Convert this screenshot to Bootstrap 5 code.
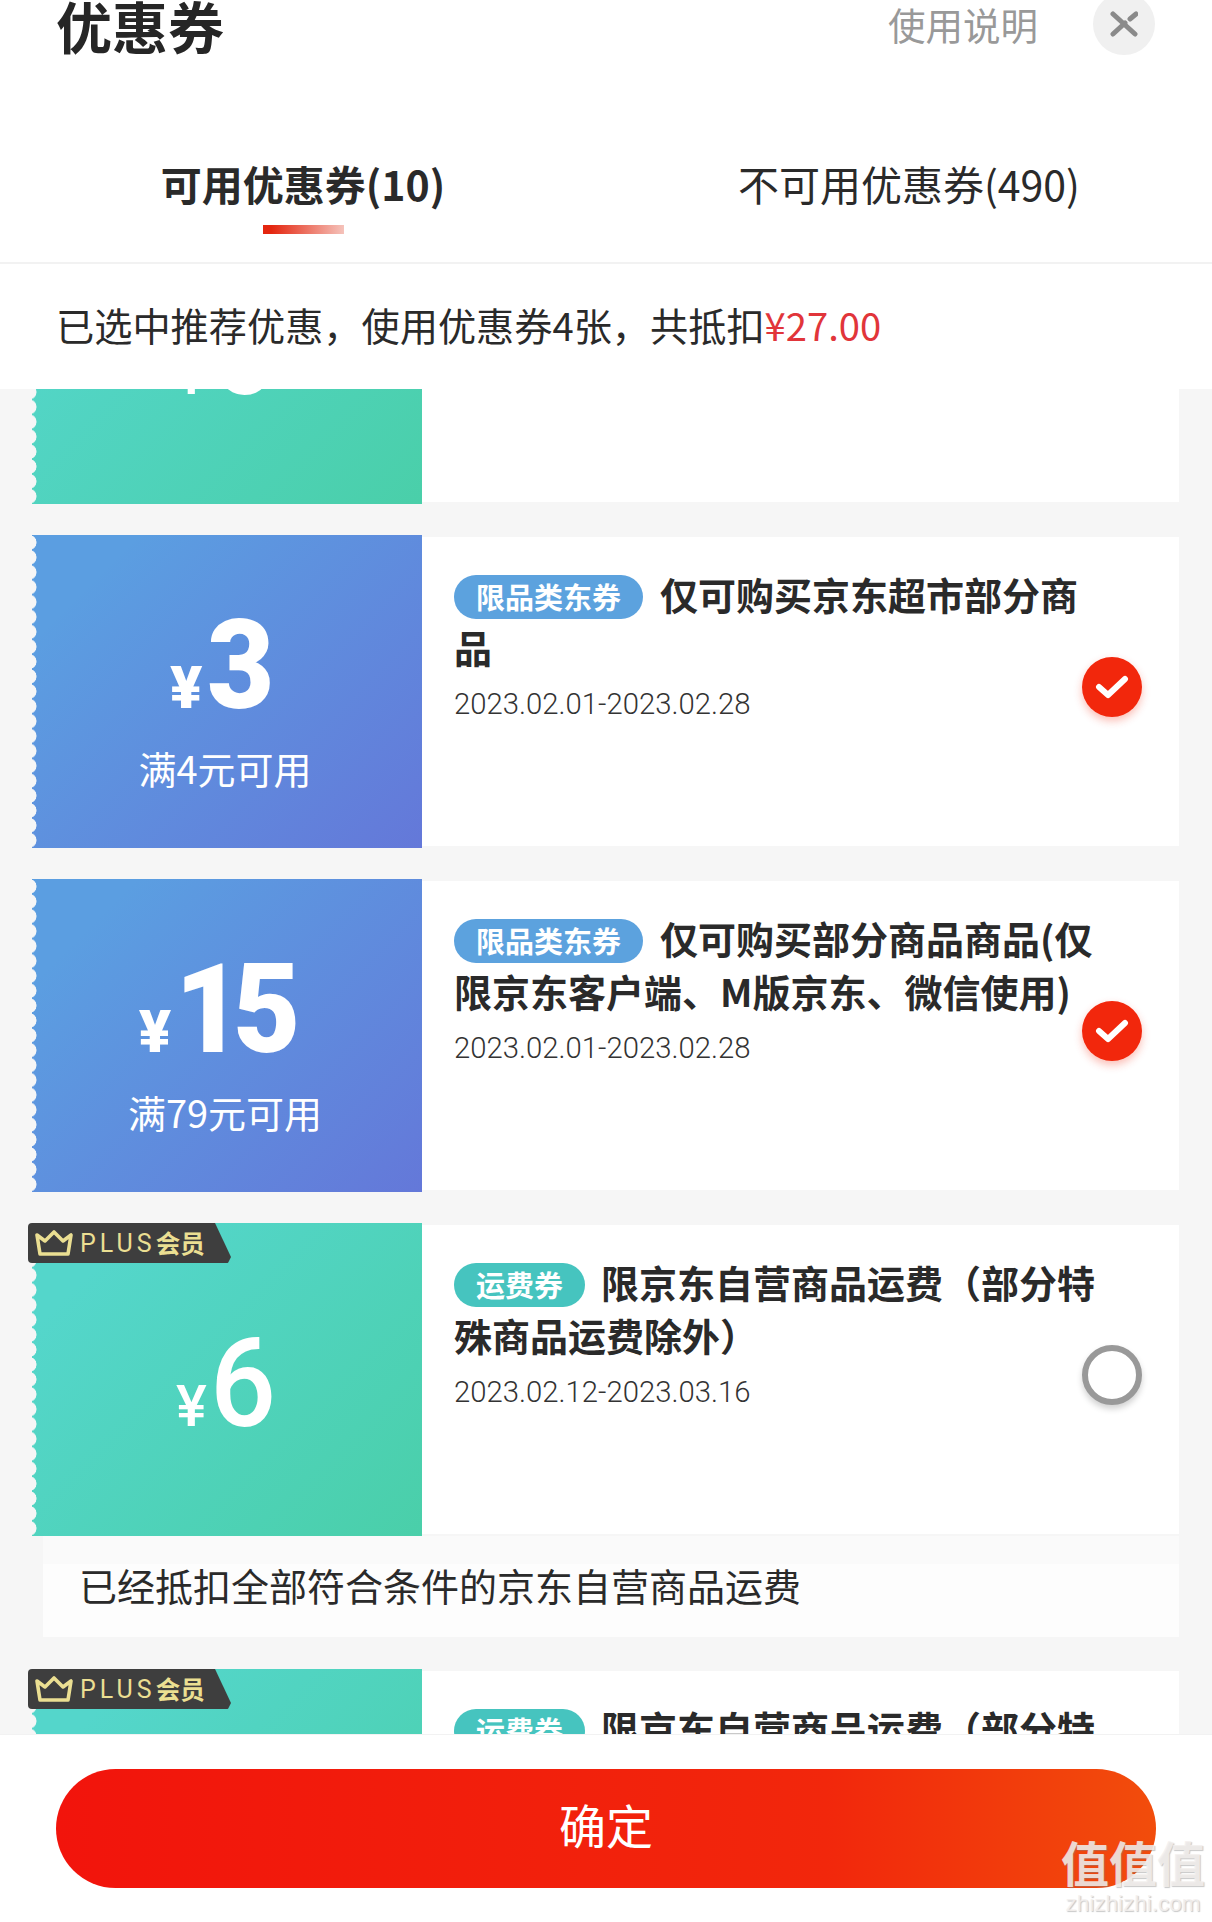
<!DOCTYPE html>
<html lang="zh-CN">
<head>
  <meta charset="UTF-8">
  <meta name="viewport" content="width=device-width, initial-scale=1">
  <title>优惠券</title>
  <link href="https://cdn.jsdelivr.net/npm/bootstrap@5.3.0/dist/css/bootstrap.min.css" rel="stylesheet">
  <style>
    html, body { height: 100%; }
    body { font-family: "Noto Sans CJK SC", sans-serif; color: #2a2a2a; overflow: hidden; }
    .sheet { height: 1922px; }

    /* header */
    .top-row { height: 50px; padding: 0 57px 0 56px; }
    .sheet-title { font-size: 56px; font-weight: 700; line-height: 1; color: #262626; }
    .help-link { font-size: 37.5px; line-height: 1; color: #999; margin: 0 55px 2px 0; }
    .close-btn { width: 62px; height: 62px; background: #f0f0f0; flex-shrink: 0; margin-bottom: 2px; }
    .tabbar { padding-top: 106px; border-bottom: 2px solid #f2f2f2; }
    .tab-item { font-size: 41px; line-height: 54px; color: #2a2a2a; padding: 0 0 28px; }
    .tab-item:hover { color: #2a2a2a; }
    .tab-item.active { font-weight: 700; }
    .tab-bar-mark { width: 81px; height: 9px; margin: 15px auto 0; }
    .tab-item.active .tab-bar-mark { background: linear-gradient(90deg, #e4260f 10%, #f5c3bb 100%); }
    .info-row { height: 125px; padding: 0 0 4px 56px; font-size: 38.2px; }
    .info-row em { font-style: normal; color: #e1353a; }

    /* list */
    .coupon-list { background: #f6f6f6; overflow: hidden; }
    .coupon-scroll { margin-top: -198px; }
    .coupon-item { height: 313px; margin: 0 33px 31px 32px; }
    .ticket { width: 390px; height: 313px; flex-shrink: 0; color: #fff; }
    .ticket::before {
      content: ""; position: absolute; left: 0; top: 0; bottom: 0; width: 6px;
      background: radial-gradient(circle at -3px 50%, #f6f6f6 7.2px, transparent 7.8px) 0 0 / 6px 14.9px repeat-y;
    }
    .ticket-blue { background: linear-gradient(135deg, #5b9ee1 15%, #6478d9); }
    .ticket-green { background: linear-gradient(135deg, #54d6cb 15%, #4acfa9); }
    .amount { font-family: Roboto, sans-serif; line-height: 1; }
    .ticket-pad .amount { margin-right: 11px; }
    .amount-sign { font-size: 60px; font-weight: 900; margin-right: 4px; }
    .amount-num { display: inline-block; font-size: 125px; font-weight: 900; letter-spacing: -10px; transform: scaleX(.93); transform-origin: left; }
    .ticket-green .amount-num { font-weight: 500; letter-spacing: 0; }
    .ticket-green .amount-sign { font-size: 58px; font-weight: 500; margin-left: 3px; margin-right: 3px; }
    .ticket-sub { font-size: 38px; line-height: 1; margin-top: 21px; }
    .ticket-pad { padding: 68px 4px 0 0; }
    .ticket-mid { padding-top: 98px; }

    .plus-tag {
      position: absolute; left: -4px; top: 0; width: 203px; height: 40px; padding-left: 7px;
      background: #3e3e3e; color: #ebdf92; border-radius: 4px;
      clip-path: polygon(0 0, 187px 0, 203px 34px, 200px 40px, 0 40px);
      font-size: 25px; line-height: 1;
    }
    .plus-tag b { font-size: 24.5px; }
    .plus-tag span { font-family: Roboto, sans-serif; letter-spacing: 4px; margin-left: 7px; }

    .coupon-body { margin: 2px 0; padding: 30px 0 0 32px; background: #fff; }
    .coupon-title { width: 646px; font-size: 38px; line-height: 53px; font-weight: 700; color: #2a2a2a; }
    .kind-pill {
      display: inline-block; height: 44px; line-height: 42px; padding: 0 22px; margin-right: 17px;
      border-radius: 22px; color: #fff; font-size: 29px; vertical-align: 1px;
    }
    .pill-blue { background: #5ca2de; }
    .pill-green { background: #46c4bf; margin-right: 16px; }
    .coupon-date { font-family: Roboto, sans-serif; font-weight: 300; font-size: 29.3px; line-height: 40px; margin-top: 11px; color: #333; }
    .pick-mark { position: absolute; right: 37px; top: 120px; width: 60px; height: 60px; }
    .pick-on { background: #f2270c; box-shadow: 0 4px 8px rgba(242, 39, 12, .3); }
    .pick-off { background: #fff; border: 6px solid #999; box-shadow: 0 4px 6px rgba(0, 0, 0, .18); }
    .coupon-note {
      height: 101px; margin: -31px 33px 32px 43px; padding: 0 0 5px 36px; font-size: 38px;
      background: linear-gradient(#fafafa 28px, #fdfdfd 28px);
    }

    /* bottom */
    .bottom-bar { height: 188px; padding: 34px 56px 0; border-top: 1px solid #f2f2f2; background: #fff; flex-shrink: 0; }
    .ok-btn {
      height: 119px; padding: 0 0 8px; border: 0; border-radius: 60px; color: #fff; font-size: 47px;
      background: linear-gradient(90deg, #f2140c, #f2270c 70%, #f24d0c);
    }
    .ok-btn:hover { color: #fff; background: linear-gradient(90deg, #f2140c, #f2270c 70%, #f24d0c); }
    .watermark { position: absolute; right: 6px; bottom: 6px; width: 146px; color: rgba(244, 240, 238, .85); text-shadow: 1px 1px 1px rgba(130, 130, 130, .45); text-align: center; }
    .watermark-big { font-size: 48px; line-height: 50px; font-weight: 700; margin-bottom: 4px; }
    .watermark-small { font-family: "Liberation Sans", sans-serif; font-size: 22.5px; line-height: 24px; margin-top: 6px; }
  </style>
</head>
<body>
  <div class="sheet d-flex flex-column position-relative">
    <header class="bg-white flex-shrink-0">
      <div class="top-row d-flex align-items-center">
        <div class="sheet-title me-auto">优惠券</div>
        <div class="help-link">使用说明</div>
        <div class="close-btn rounded-circle d-flex align-items-center justify-content-center">
          <svg width="28" height="26" viewBox="0 0 28 26"><path d="M3 3 L25 23 M26 3 L20 8 M15 12 L3 23" fill="none" stroke="#8a8a8a" stroke-width="5" stroke-linecap="round"/></svg>
        </div>
      </div>
      <nav class="tabbar nav nav-justified">
        <a class="nav-link tab-item active" href="#">可用优惠券(10)<div class="tab-bar-mark"></div></a>
        <a class="nav-link tab-item" href="#">不可用优惠券(490)<div class="tab-bar-mark"></div></a>
      </nav>
      <div class="info-row d-flex align-items-center">已选中推荐优惠，使用优惠券4张，共抵扣<em>¥27.00</em></div>
    </header>

    <main class="coupon-list flex-grow-1">
      <div class="coupon-scroll">
        <div class="coupon-item d-flex">
          <div class="ticket ticket-green position-relative d-flex flex-column align-items-center ticket-mid">
            <div class="amount"><span class="amount-sign">¥</span><span class="amount-num">6</span></div>
          </div>
          <div class="coupon-body flex-grow-1"></div>
        </div>

        <div class="coupon-item d-flex">
          <div class="ticket ticket-blue position-relative d-flex flex-column align-items-center ticket-pad">
            <div class="amount"><span class="amount-sign">¥</span><span class="amount-num">3</span></div>
            <div class="ticket-sub">满4元可用</div>
          </div>
          <div class="coupon-body flex-grow-1 position-relative">
            <div class="coupon-title"><span class="kind-pill pill-blue">限品类东券</span>仅可购买京东超市部分商品</div>
            <div class="coupon-date">2023.02.01-2023.02.28</div>
            <div class="pick-mark pick-on rounded-circle d-flex align-items-center justify-content-center">
              <svg width="34" height="26" viewBox="0 0 34 26"><path d="M4 13 L13 21 L30 5" fill="none" stroke="#fff" stroke-width="6" stroke-linecap="round" stroke-linejoin="round"/></svg>
            </div>
          </div>
        </div>

        <div class="coupon-item d-flex">
          <div class="ticket ticket-blue position-relative d-flex flex-column align-items-center ticket-pad">
            <div class="amount"><span class="amount-sign">¥</span><span class="amount-num">15</span></div>
            <div class="ticket-sub">满79元可用</div>
          </div>
          <div class="coupon-body flex-grow-1 position-relative">
            <div class="coupon-title"><span class="kind-pill pill-blue">限品类东券</span>仅可购买部分商品商品(仅限京东客户端、M版京东、微信使用)</div>
            <div class="coupon-date">2023.02.01-2023.02.28</div>
            <div class="pick-mark pick-on rounded-circle d-flex align-items-center justify-content-center">
              <svg width="34" height="26" viewBox="0 0 34 26"><path d="M4 13 L13 21 L30 5" fill="none" stroke="#fff" stroke-width="6" stroke-linecap="round" stroke-linejoin="round"/></svg>
            </div>
          </div>
        </div>

        <div class="coupon-item d-flex">
          <div class="ticket ticket-green position-relative d-flex flex-column align-items-center ticket-mid">
            <div class="plus-tag d-flex align-items-center">
              <svg width="38" height="27" viewBox="0 0 38 27"><path d="M2 5 L10 11 L19 2 L28 11 L36 5 L33 24 L5 24 Z" fill="none" stroke="#ebdf92" stroke-width="3.6" stroke-linejoin="round"/></svg>
              <span>PLUS</span><b>会员</b>
            </div>
            <div class="amount"><span class="amount-sign">¥</span><span class="amount-num">6</span></div>
          </div>
          <div class="coupon-body flex-grow-1 position-relative">
            <div class="coupon-title"><span class="kind-pill pill-green">运费券</span>限京东自营商品运费（部分特殊商品运费除外）</div>
            <div class="coupon-date">2023.02.12-2023.03.16</div>
            <div class="pick-mark pick-off rounded-circle"></div>
          </div>
        </div>
        <div class="coupon-note d-flex align-items-center">已经抵扣全部符合条件的京东自营商品运费</div>

        <div class="coupon-item d-flex">
          <div class="ticket ticket-green position-relative d-flex flex-column align-items-center ticket-mid">
            <div class="plus-tag d-flex align-items-center">
              <svg width="38" height="27" viewBox="0 0 38 27"><path d="M2 5 L10 11 L19 2 L28 11 L36 5 L33 24 L5 24 Z" fill="none" stroke="#ebdf92" stroke-width="3.6" stroke-linejoin="round"/></svg>
              <span>PLUS</span><b>会员</b>
            </div>
          </div>
          <div class="coupon-body flex-grow-1 position-relative">
            <div class="coupon-title"><span class="kind-pill pill-green">运费券</span>限京东自营商品运费（部分特殊商品运费除外）</div>
          </div>
        </div>
      </div>
    </main>

    <footer class="bottom-bar">
      <button type="button" class="btn ok-btn w-100">确定</button>
    </footer>

    <div class="watermark">
      <div class="watermark-big">值值值</div>
      <div class="watermark-small">zhizhizhi.com</div>
    </div>
  </div>

  <script src="https://cdn.jsdelivr.net/npm/bootstrap@5.3.0/dist/js/bootstrap.bundle.min.js"></script>
</body>
</html>
